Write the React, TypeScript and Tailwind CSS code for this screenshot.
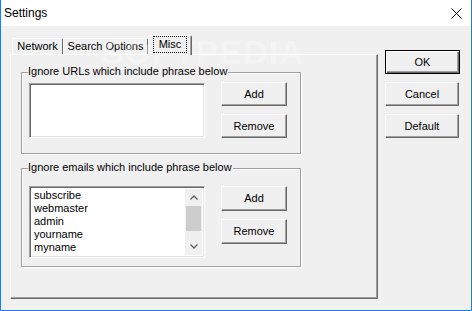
import React from 'react';

const font = { fontFamily: '"Liberation Sans", Arial, sans-serif' };

function WinButton({ label, isDefault = false, className = '' }: { label: string; isDefault?: boolean; className?: string }) {
  return (
    <button
      className={`flex items-center justify-center bg-[#f0f0f0] text-[11px] leading-[13px] text-black ${
        isDefault
          ? 'border border-black shadow-[inset_1px_1px_0_#ffffff,inset_-1px_-1px_0_#696969,inset_-2px_-2px_0_#a0a0a0]'
          : 'border border-t-white border-l-white border-r-[#696969] border-b-[#696969] shadow-[inset_-1px_-1px_0_#a0a0a0]'
      } ${className}`}
    >
      {label}
    </button>
  );
}

function GroupBox({ label, className = '', children }: { label: string; className?: string; children: React.ReactNode }) {
  return (
    <div className={`relative w-[280px] border border-[#a0a0a0] shadow-[inset_1px_1px_0_#ffffff,1px_1px_0_#ffffff] ${className}`}>
      <span className="absolute -top-[8px] left-[6px] bg-[#f0f0f0] pr-px text-[11px] leading-[13px] text-black">
        {label}
      </span>
      {children}
    </div>
  );
}

const sunken =
  'border border-t-[#a0a0a0] border-l-[#a0a0a0] border-r-white border-b-white shadow-[inset_1px_1px_0_#696969,inset_-1px_-1px_0_#e3e3e3] bg-white';

export default function App() {
  const emails = ['subscribe', 'webmaster', 'admin', 'yourname', 'myname'];

  return (
    <div style={font} className="relative w-[472px] h-[311px] overflow-hidden bg-[#f0f0f0] border-x border-b border-[#1883d7]">
      {/* title bar */}
      <div className="flex items-center justify-between h-[26px] bg-white pl-[3px] pr-[9px]">
        <span className="text-[12px] text-black">Settings</span>
        <svg width="11" height="11" viewBox="0 0 11 11" className="mt-px">
          <path d="M0.5 0.5 L10.5 10.5 M10.5 0.5 L0.5 10.5" stroke="#000" strokeWidth="1" />
        </svg>
      </div>

      <div className="flex items-start">
        {/* tabs + page */}
        <div className="pl-[9px] pt-[9px]">
          <div className="flex items-end h-[19px] pl-[2px] text-[11px] leading-[13px] text-black">
            <div className="flex items-center justify-center w-[51px] h-[16px] border-l border-t border-r border-white border-r-[#696969] rounded-t-[2px]">
              Network
            </div>
            <div className="flex items-center justify-center w-[85px] h-[16px] border-l border-t border-r border-white border-r-[#696969] rounded-t-[2px]">
              Search Options
            </div>
            <div className="relative z-10 -mb-px flex items-center justify-center w-[44px] h-[20px] bg-[#f0f0f0] border-l border-t border-r border-white border-r-[#696969] rounded-t-[2px] shadow-[inset_-1px_0_0_#a0a0a0]">
              <span className="px-[5px] pt-px pb-[1px] -mt-[2px] border border-dotted border-black">Misc</span>
            </div>
          </div>

          <div className="w-[368px] h-[245px] border border-white border-r-[#696969] border-b-[#696969] shadow-[inset_-1px_-1px_0_#a0a0a0] pl-[10px] pt-[17px]">
            <GroupBox label="Ignore URLs which include phrase below" className="h-[82px]">
              <div className="flex items-start pl-[7px] pt-[9px]">
                <div className={`mt-[1px] w-[176px] h-[55px] ${sunken}`} />
                <div className="ml-[16px] flex flex-col gap-[8px]">
                  <WinButton label="Add" className="w-[66px] h-[24px]" />
                  <WinButton label="Remove" className="w-[66px] h-[24px]" />
                </div>
              </div>
            </GroupBox>

            <GroupBox label="Ignore emails which include phrase below" className="mt-[14px] h-[99px]">
              <div className="flex items-start pl-[7px] pt-[17px]">
                <div className={`flex w-[176px] h-[72px] p-[2px] ${sunken}`}>
                  <div className="flex-1 pl-[2px] text-[11px] leading-[13px] text-black">
                    {emails.map((e) => (
                      <div key={e}>{e}</div>
                    ))}
                  </div>
                  <div className="flex flex-col w-[17px] bg-[#f0f0f0]">
                    <div className="flex items-center justify-center h-[17px]">
                      <svg width="8" height="5" viewBox="0 0 8 5">
                        <path d="M0.5 4.5 L4 1 L7.5 4.5" fill="none" stroke="#606060" strokeWidth="1.3" />
                      </svg>
                    </div>
                    <div className="flex-1 px-px">
                      <div className="h-[25px] bg-[#cdcdcd]" />
                    </div>
                    <div className="flex items-center justify-center h-[17px]">
                      <svg width="8" height="5" viewBox="0 0 8 5">
                        <path d="M0.5 0.5 L4 4 L7.5 0.5" fill="none" stroke="#606060" strokeWidth="1.3" />
                      </svg>
                    </div>
                  </div>
                </div>
                <div className="ml-[16px] flex flex-col gap-[8px]">
                  <WinButton label="Add" className="w-[66px] h-[25px]" />
                  <WinButton label="Remove" className="w-[66px] h-[25px]" />
                </div>
              </div>
            </GroupBox>
          </div>
        </div>

        {/* dialog buttons */}
        <div className="ml-[7px] mt-[24px] flex flex-col gap-[8px]">
          <WinButton label="OK" isDefault className="w-[75px] h-[24px]" />
          <WinButton label="Cancel" className="w-[74px] h-[24px]" />
          <WinButton label="Default" className="w-[74px] h-[24px]" />
        </div>
      </div>

      {/* watermark */}
      <div className="pointer-events-none absolute left-[100px] top-[27px] text-[34px] font-bold tracking-[1px] text-white/30 select-none">
        SOFTPEDIA<sup className="text-[10px] align-top">®</sup>
      </div>
    </div>
  );
}
